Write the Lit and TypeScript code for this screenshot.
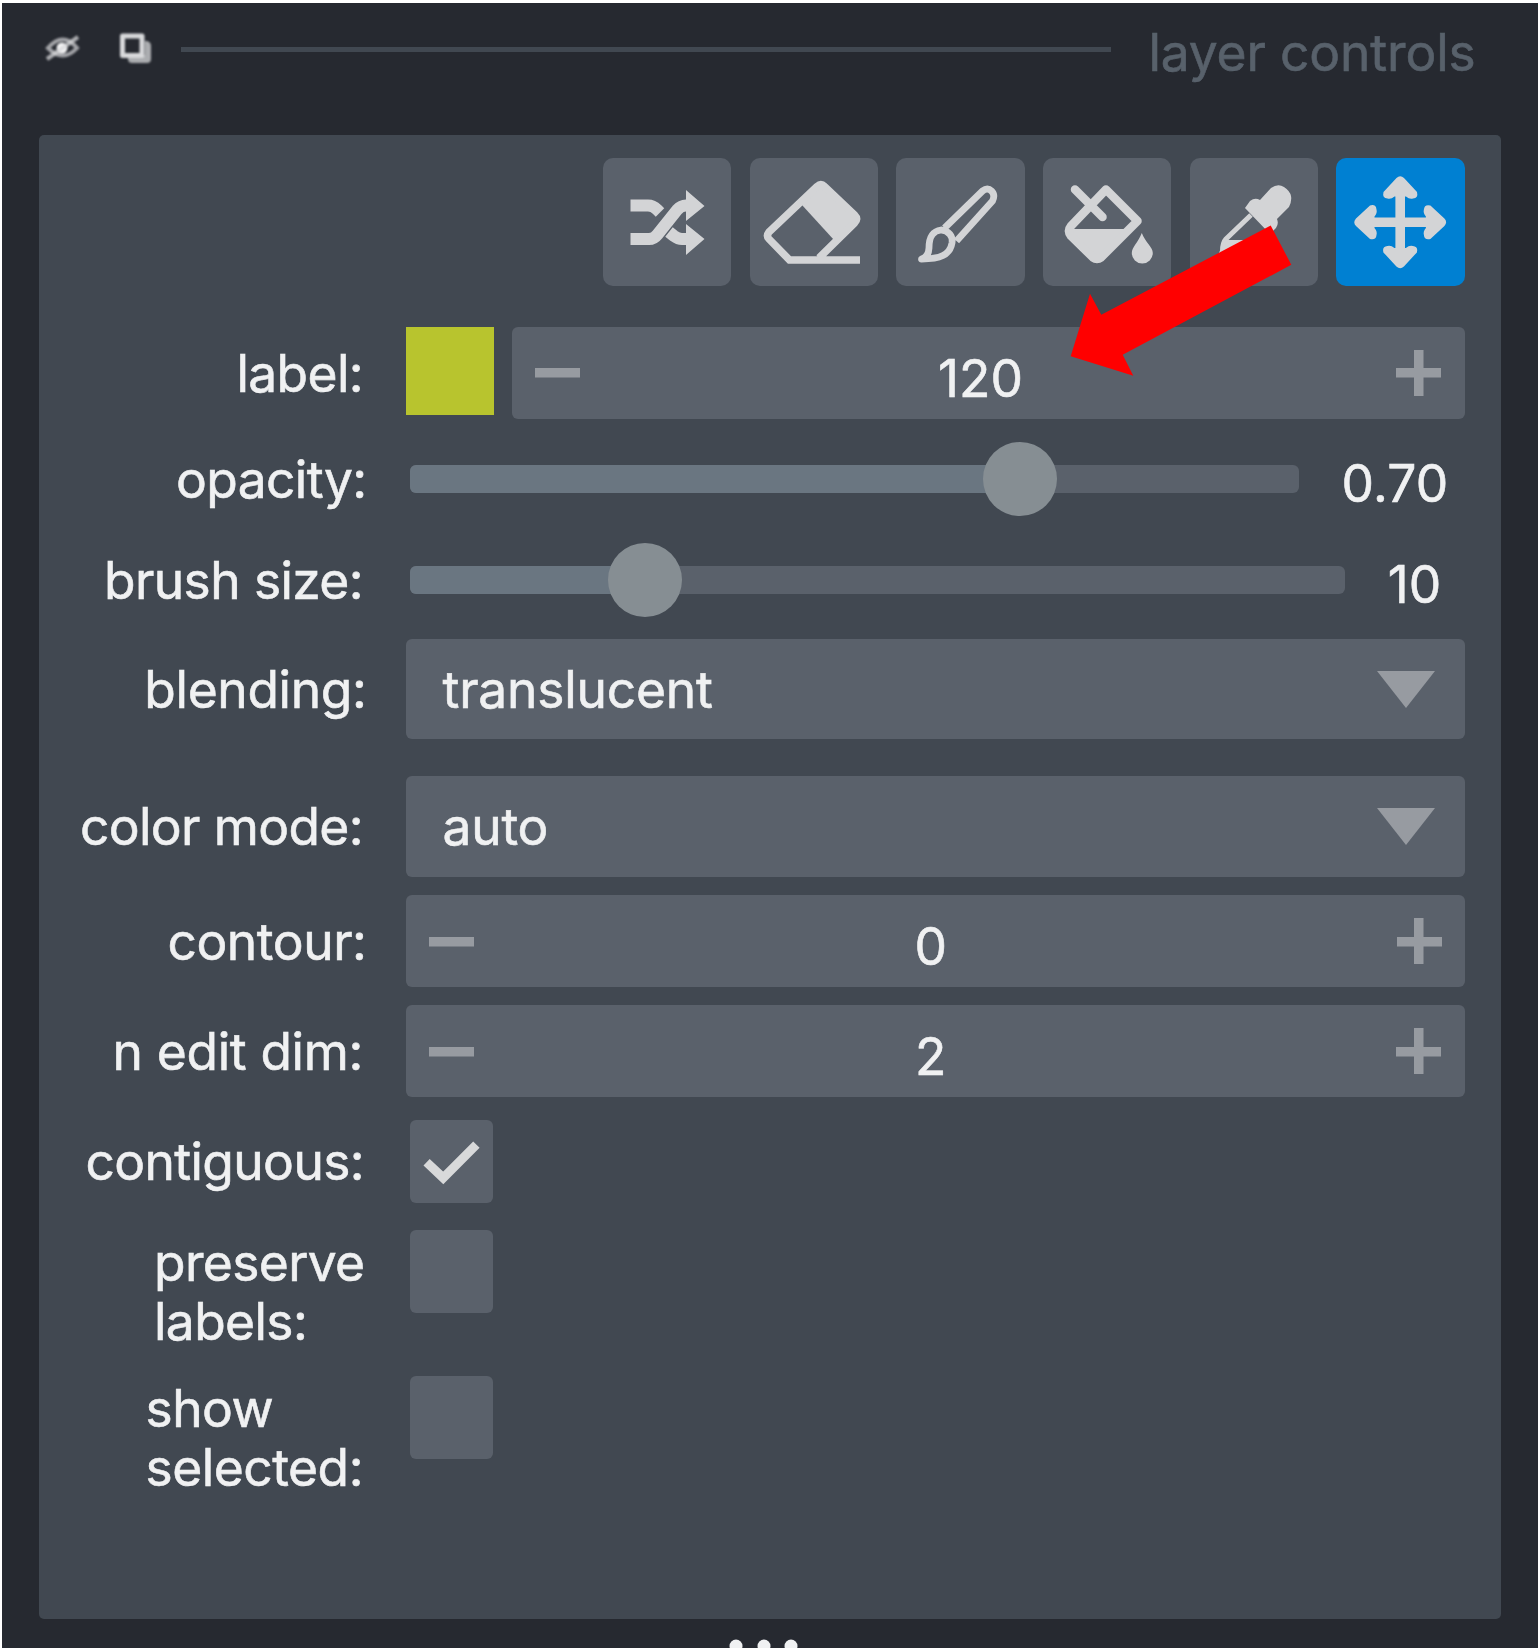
import { LitElement, html, css, svg, TemplateResult } from "lit";
import { customElement } from "lit/decorators.js";

const shuffle = svg`
  <path d="M27.500 47.500H45q5 0 9 4l3 3M27.500 81H46q5 0 8.500-4.500L74 52q4-4.500 9-4.500h4M66 74l5 4q4 3 8 3h8" fill="none" stroke="currentColor" stroke-width="12"/>
  <path d="M83 32 L101.500 48 L83 63Z M83 66 L101.500 81 L83 97Z" fill="currentColor"/>`;
const eraser = svg`
  <path d="M52 47 L67 27 Q71 24 75 27 L105 57 Q108 61 105 65 L84 82Z" fill="currentColor"/>
  <path d="M110 102H39.500L19 81q-3-3 0-7L67 28.500q4-3.500 7.500 0L104.500 57q4 4 0 8L69 100" fill="none" stroke="currentColor" stroke-width="7.500"/>`;
const brush = svg`
  <path d="M48.500 70 L86.500 33q5-4 9 0t1 10L60.500 83M25.500 101q7-2 7.500-11c0-13 5-17 12-18 8 1 12 6 11 13-2 12-12 16-30.500 16Z" fill="none" stroke="currentColor" stroke-width="6.800" stroke-linejoin="round"/>`;
const bucket = svg`
  <path d="M27 71H90L58 103q-4 3-8 0L24 77Z" fill="currentColor"/>
  <path d="M32 31.500 L59.500 59M63 31.500 L94.500 63 L58 99.500q-4 3-8 0L28 78q-4-5 0-10Z" fill="none" stroke="currentColor" stroke-width="8.500" stroke-linecap="round" stroke-linejoin="round"/>
  <path d="M98.800 75c-4 10-10 14-10 20a10.500 10.500 0 0 0 21 0c0-6-7-10-11-20Z" fill="currentColor"/>`;
const picker = svg`
  <path d="M60 43q5-4 10-1L81 30q7-5 13-1t7 9-2 11L87 61q2 5-1 9L80 76 55 50Z" fill="currentColor"/>
  <path d="M33 82H70L44 98 29.500 102Z" fill="currentColor"/>
  <path d="M61 57 L36 81q-3.500 4-3.500 12l-3 7" fill="none" stroke="currentColor" stroke-width="5"/>`;
const head = svg`<path d="M60.500 20q3.700-3.500 7.500 0l13 14q1.500 6-4 6.500-3.500 1-7-2H58.500q-3.500 3-7 2-5.500-.5-4-6.500Z" fill="currentColor"/>`;
const move = svg`
  <path d="M64.200 28V101M28 64.200H101" stroke="currentColor" stroke-width="9.600"/>
  ${[0, 90, 180, 270].map((a) => svg`<g transform="rotate(${a} 64.200 64.200)">${head}</g>`)}`;

const tools = [shuffle, eraser, brush, bucket, picker, move];

const spin = (value: string) => html`
  <div class="field spin">
    <span class="minus"></span><span class="num">${value}</span><span class="plus"></span>
  </div>`;
const combo = (value: string) => html`
  <div class="field combo"><span class="choice">${value}</span>
    <svg class="caret" viewBox="0 0 58 37"><path d="M0 0H58L29 37Z" fill="currentColor"/></svg>
  </div>`;
const slider = (value: string, pct: number) => html`
  <div class="groove">
    <div class="fill" style="width:${pct}%"></div>
    <div class="knob" style="left:${pct}%"></div>
  </div>
  <span class="num reading">${value}</span>`;
const check = (on: boolean) => html`
  <div class="check">${on
    ? html`<svg viewBox="0 0 82 82"><path d="M16.500 42 L33 57.500 L66 24.500" fill="none" stroke="currentColor" stroke-width="9"/></svg>`
    : ""}</div>`;

interface Row { cls: string; label: string | TemplateResult; body: TemplateResult; }

const rows: Row[] = [
  { cls: "r-label", label: "label:", body: html`<div class="swatch"></div>${spin("120")}` },
  { cls: "r-opacity wide", label: "opacity:", body: slider("0.70", 68.6) },
  { cls: "r-brush", label: "brush size:", body: slider("10", 25.1) },
  { cls: "r-blend wide", label: "blending:", body: combo("translucent") },
  { cls: "r-mode", label: "color mode:", body: combo("auto") },
  { cls: "r-contour wide", label: "contour:", body: spin("0") },
  { cls: "r-dim", label: "n edit dim:", body: spin("2") },
  { cls: "r-contig", label: "contiguous:", body: check(true) },
  { cls: "r-two", label: html`preserve<br>labels:`, body: check(false) },
  { cls: "r-two r-show", label: html`show<br>selected:`, body: check(false) },
];

@customElement("app-root")
export class AppRoot extends LitElement {
  static styles = css`
    :host { display: block; box-sizing: border-box; width: 1540px; height: 1650px; padding: 2.5px 2px; background: #fff;
      font-family: Inter, sans-serif; font-size: 51.5px; line-height: 59.6px; color: #f0f1f2; }
    * { box-sizing: border-box; }
    svg { display: block; }
    .dock { position: relative; display: flex; flex-direction: column; width: 1536px; height: 1645px; background: #262930; overflow: hidden; }
    .head { display: flex; align-items: flex-start; height: 132.500px; flex: none; padding-left: 40.5px; }
    .hi { width: 40px; height: 40px; color: #d8d9db; margin-top: 24px; flex: none; filter: blur(0.8px); }
    .hi + .hi { margin-left: 31px; }
    .rule { width: 930px; height: 5px; margin: 44.5px 0 0 27px; background: #414851; flex: none; }
    .title { margin: 20.500px 0 0 38px; color: #58616b; letter-spacing: -0.150px; white-space: nowrap; -webkit-text-stroke: 0.6px currentColor; }
    .panel { width: 1462px; height: 1484px; margin-left: 37px; flex: none; border-radius: 5px; background: #414851; padding-top: 23px; }
    .tools { display: flex; justify-content: flex-end; gap: 18.333px; padding-right: 36.500px; height: 128.333px; }
    .tool { width: 128.333px; height: 128.333px; border-radius: 10px; background: #5a616b; color: #d3d4d6; }
    .tool:last-child { background: #0080d2; }
    .row { display: flex; align-items: center; padding-right: 36.500px; }
    .name { width: 324px; margin-right: 42.500px; text-align: right; flex: none; white-space: nowrap; letter-spacing: -0.620px; padding-top: 1px;
      -webkit-text-stroke: 0.6px currentColor; }
    .wide .name { width: 327.500px; margin-right: 39px; }
    .r-label { margin-top: 40.500px; height: 92px; }
    .r-opacity { height: 100px; margin-top: 10px; }
    .r-brush { height: 100px; margin-top: 1px; }
    .r-blend { height: 100.500px; margin-top: 9px; }
    .r-blend .name, .r-dim .name { letter-spacing: -0.350px; }
    .r-mode { height: 101px; margin-top: 36.500px; }
    .r-contour { height: 92px; margin-top: 18.500px; }
    .r-contour .name { letter-spacing: -0.450px; }
    .r-dim { height: 92px; margin-top: 18px; }
    .r-contig { height: 82.500px; margin-top: 23px; }
    .r-contig .name { width: 325px; margin-right: 41.500px; }
    .r-two { height: 119px; margin-top: 27.500px; align-items: flex-start; }
    .r-two .name { display: flex; justify-content: flex-end; text-align: left; width: 325.500px; margin-right: 41px; padding-top: 2.5px; }
    .r-show { margin-top: 27px; }
    .r-show .name { width: 324px; margin-right: 42.500px; letter-spacing: -0.480px; }
    .swatch { width: 88px; height: 88px; background: #b8c42e; align-self: flex-start; margin-right: 18.500px; flex: none; }
    .field { flex: 1; height: 100%; border-radius: 6px; background: #5a616b; display: flex; align-items: center; }
    .spin { padding: 0 23px 0 23.5px; justify-content: space-between; }
    .r-label .spin { padding-left: 22.5px; }
    .minus, .plus { width: 45px; height: 46px; flex: none; color: #979ba1;
      background: linear-gradient(currentColor, currentColor) center / 45px 9.500px no-repeat; }
    .plus { background: linear-gradient(currentColor, currentColor) center / 45px 9.500px no-repeat,
      linear-gradient(currentColor, currentColor) center / 9.500px 46px no-repeat; }
    .num { padding-top: 11px; -webkit-text-stroke: 0.6px currentColor; }
    .spin .num { margin-right: 9px; }
    .r-label .num { margin-right: 15px; }
    .choice { letter-spacing: -0.200px; padding-top: 1px; -webkit-text-stroke: 0.6px currentColor; }
    .combo { justify-content: space-between; padding: 0 30px 0 37px; }
    .caret { width: 58px; height: 37px; color: #979ba1; margin-top: 1px; }
    .groove { position: relative; flex: 1; height: 28.500px; border-radius: 6px; background: #5a616b; margin-left: 4.5px; }
    .fill { height: 100%; border-radius: 6px 0 0 6px; background: #6a7681; }
    .knob { position: absolute; top: 50%; width: 74px; height: 74px; border-radius: 50%; background: #868e93; transform: translate(-50%, -50%); }
    .reading { margin-left: 42.5px; margin-right: 16px; letter-spacing: 0.2px; padding-top: 10px; }
    .r-brush .reading { margin-left: 43px; margin-right: 23px; }
    .check { width: 82.500px; height: 82.500px; border-radius: 6px; background: #5a616b; margin-left: 4.5px; color: #d8d9da; }
    .dots { position: absolute; left: 726px; top: 1635px; width: 72px; height: 14px; color: #f0f1f2; }
    .arrow { position: absolute; left: 1068px; top: 222px; width: 222px; height: 152px; }
  `;

  render() {
    return html`
      <div class="dock">
        <div class="head">
          <svg class="hi" viewBox="0 0 40 40">
            <path d="M5 21Q20 4 34 21 20 36 5 21Z" fill="none" stroke="currentColor" stroke-width="4" opacity=".7"/>
            <circle cx="19" cy="21" r="5.500" fill="#f4f4f5"/>
            <path d="M4 32 L35 10" stroke="currentColor" stroke-width="4" opacity=".75"/>
          </svg>
          <svg class="hi" viewBox="0 0 40 40">
            <path d="M14 28h17V14h2q4 1 4 5v13q0 4-4 4H18q-4 0-4-4Z" fill="currentColor" opacity=".75"/>
            <path d="M8.500 9H28V28.500H8.500Z" fill="#262930" stroke="currentColor" stroke-width="5" stroke-linejoin="round"/>
          </svg>
          <div class="rule"></div>
          <div class="title">layer controls</div>
        </div>
        <div class="panel">
          <div class="tools">
            ${tools.map((t) => html`<svg class="tool" viewBox="0 0 128.333 128.333">${t}</svg>`)}
          </div>
          ${rows.map((r) => html`
            <div class="row ${r.cls}"><div class="name"><span>${r.label}</span></div>${r.body}</div>`)}
        </div>
        <svg class="dots" viewBox="0 0 72 14">
          <circle cx="8" cy="8" r="6.500" fill="currentColor"/><circle cx="36" cy="8" r="6.500" fill="currentColor"/><circle cx="63" cy="8" r="6.500" fill="currentColor"/>
        </svg>
        <svg class="arrow" viewBox="1070 224.500 222 152">
          <path d="M1270.700 225 L1291.300 264.300 L1122.700 354.300 L1133.300 375.300 L1070.700 355.700 L1090 293.300 L1101.300 314.300Z" fill="#f00"/>
        </svg>
      </div>`;
  }
}
